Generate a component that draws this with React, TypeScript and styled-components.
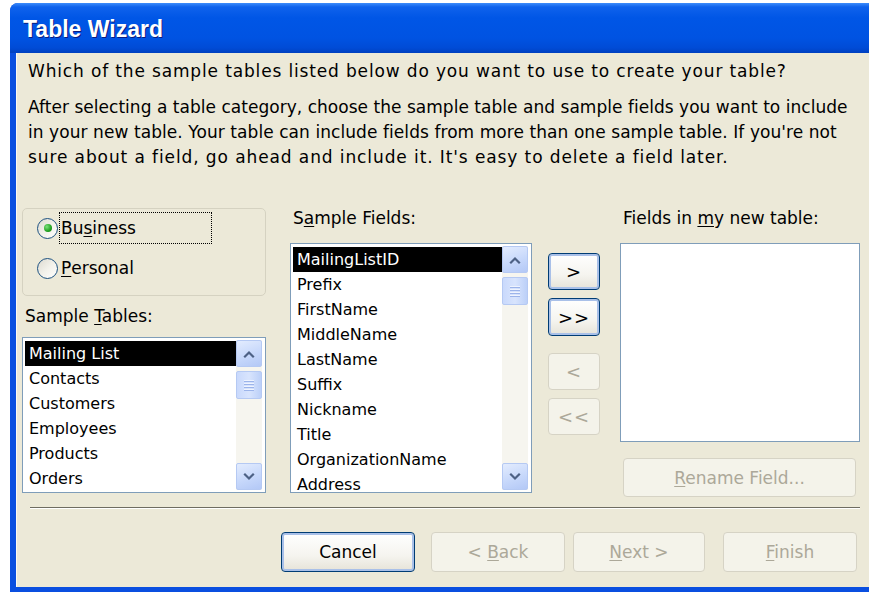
import React from "react";
import styled, { createGlobalStyle } from "styled-components";

const GlobalStyle = createGlobalStyle`
  html, body {
    margin: 0;
    padding: 0;
    background: #fff;
    overflow: hidden;
  }
  body {
    font-family: "DejaVu Sans", "Liberation Sans", sans-serif;
    font-size: 17px;
    color: #000;
  }
`;

const Window = styled.div`
  margin: 3px 0 0 10px;
  width: 859px;
  height: 589px;
  display: flex;
  flex-direction: column;
  border-radius: 8px 0 0 0;
  overflow: hidden;
  background: #0843d0;
`;

const TitleBar = styled.div`
  height: 50px;
  flex: none;
  box-sizing: border-box;
  padding: 3px 0 0 13px;
  display: flex;
  align-items: center;
  background: linear-gradient(
    180deg,
    #3d8cfb 0%,
    #0f62ec 8%,
    #0056e6 30%,
    #0053e2 70%,
    #004bd6 90%,
    #0040bf 100%
  );
`;

const Title = styled.span`
  font-family: "Liberation Sans", "DejaVu Sans", sans-serif;
  font-weight: bold;
  font-size: 23px;
  color: #fff;
  text-shadow: 1px 1px 0 #0a1c80;
`;

const Frame = styled.div`
  flex: 1;
  display: flex;
  flex-direction: column;
  border-left: 6px solid #0a4fe0;
  border-bottom: 5px solid #0a4fe0;
  box-shadow: inset 1px 0 0 #fbfaf4;
  background: #ece9d8;
  padding: 8px 9px 0 6px;
`;

const TextLine = styled.div<{ $track?: number }>`
  padding-left: 6px;
  white-space: nowrap;
  letter-spacing: ${(p) => p.$track ?? 0}px;
`;

const Question = styled(TextLine)`
  line-height: 20px;
`;

const Intro = styled.div`
  margin-top: 14px;
  line-height: 25px;
`;

const Main = styled.div`
  margin-top: 38px;
  display: flex;
  align-items: flex-start;
`;

const Column = styled.div<{ $w: number; $gap?: number }>`
  width: ${(p) => p.$w}px;
  margin-right: ${(p) => p.$gap ?? 0}px;
  display: flex;
  flex-direction: column;
`;

const RadioGroup = styled.div`
  height: 88px;
  box-sizing: border-box;
  border: 1px solid #d5d2c1;
  border-radius: 5px;
  padding: 3px 0 0 14px;
  display: flex;
  flex-direction: column;
  gap: 8px;
`;

const RadioRow = styled.label`
  height: 32px;
  display: flex;
  align-items: center;
`;

const RadioCircle = styled.span<{ $checked?: boolean }>`
  width: 21px;
  height: 21px;
  box-sizing: border-box;
  border-radius: 50%;
  border: 1px solid #1c5180;
  background: linear-gradient(135deg, #dcdad0 0%, #f2f1ea 50%, #ffffff 100%);
  display: flex;
  align-items: center;
  justify-content: center;

  &::after {
    content: "";
    display: ${(p) => (p.$checked ? "block" : "none")};
    width: 8px;
    height: 8px;
    border-radius: 50%;
    background: radial-gradient(circle at 35% 35%, #7ce27c 0%, #21a121 60%, #158015 100%);
  }
`;

const RadioLabel = styled.span<{ $focused?: boolean }>`
  margin-left: 1px;
  height: 32px;
  width: 153px;
  box-sizing: border-box;
  padding-left: 1px;
  display: flex;
  align-items: center;
  border: 1px dotted ${(p) => (p.$focused ? "#000" : "transparent")};
`;

const FieldLabel = styled.div<{ $top?: number }>`
  line-height: 20px;
  margin-top: ${(p) => p.$top ?? 0}px;
  padding-left: 3px;
`;

const Key = styled.span`
  text-decoration: underline;
  text-underline-offset: 2px;
`;

const ListBox = styled.div<{ $h: number; $top: number }>`
  height: ${(p) => p.$h}px;
  margin-top: ${(p) => p.$top}px;
  box-sizing: border-box;
  border: 1px solid #7f9db9;
  background: #fff;
  display: flex;
  overflow: hidden;
`;

const Items = styled.ul`
  flex: 1;
  margin: 0;
  padding: 3px 0 0 2px;
  list-style: none;
  overflow: hidden;
  font-size: 16px;
`;

const Item = styled.li<{ $selected?: boolean }>`
  height: 25px;
  line-height: 25px;
  padding-left: 4px;
  white-space: nowrap;
  background: ${(p) => (p.$selected ? "#000" : "transparent")};
  color: ${(p) => (p.$selected ? "#fff" : "#000")};
`;

const ScrollBar = styled.div`
  width: 26px;
  margin: 2px 3px 2px 0;
  display: flex;
  flex-direction: column;
  background: #f6f5ef;
`;

const ScrollButton = styled.div`
  height: 27px;
  box-sizing: border-box;
  border: 1px solid #b5c9f3;
  border-radius: 2px;
  background: linear-gradient(160deg, #e3ecfe 0%, #c7d8fb 55%, #b3c8f6 100%);
  display: flex;
  align-items: center;
  justify-content: center;
  flex: none;
`;

const Thumb = styled.div`
  margin-top: 4px;
  height: 28px;
  box-sizing: border-box;
  border: 1px solid #b5c9f3;
  border-radius: 2px;
  background: linear-gradient(90deg, #c9d9fc 0%, #d8e4fd 50%, #bcd0f8 100%);
  display: flex;
  flex-direction: column;
  align-items: center;
  justify-content: center;
  gap: 2px;
  flex: none;
`;

const Grip = styled.span`
  width: 10px;
  height: 1px;
  background: #eef3fe;
  box-shadow: 0 1px 0 #9cb4ea;
`;

const Track = styled.div`
  flex: 1;
`;

const Button = styled.button<{ $w: number; $h?: number; $default?: boolean }>`
  width: ${(p) => p.$w}px;
  height: ${(p) => p.$h ?? 38}px;
  flex: none;
  box-sizing: border-box;
  font: inherit;
  padding: 0;
  color: #000;
  border: 1px solid #003c74;
  border-radius: 4px;
  background: linear-gradient(180deg, #ffffff 0%, #f5f4ef 60%, #e6e3d8 100%);
  box-shadow: ${(p) => (p.$default ? "inset 0 0 0 2px #a9c0e8" : "inset 0 0 0 1px #dfe6f2")};

  &:disabled {
    border-color: #d6d3c5;
    color: #aca899;
    background: #f4f3ea;
    box-shadow: none;
  }
`;

const ArrowColumn = styled.div`
  width: 52px;
  margin-top: 45px;
  margin-right: 20px;
  display: flex;
  flex-direction: column;
`;

const ArrowButton = styled(Button)<{ $space: number }>`
  margin-top: ${(p) => p.$space}px;
  font-size: 18px;
  letter-spacing: 1px;
`;

const RenameButton = styled(Button)`
  margin: 16px 0 0 3px;
`;

const Separator = styled.div`
  margin: 10px 0 0 8px;
  height: 1px;
  background: #6f6d62;
  border-bottom: 1px solid #fff;
`;

const Footer = styled.div`
  margin-top: 23px;
  display: flex;
  justify-content: flex-end;
  gap: 16px;
  padding-right: 3px;
`;

const NavPair = styled.div`
  display: flex;
  gap: 8px;
  margin-right: 2px;
`;

function Chevron({ up }: { up?: boolean }) {
  return (
    <svg width="12" height="10" viewBox="0 0 12 10">
      <polyline
        points={up ? "2,7.5 6,3.5 10,7.5" : "2,2.5 6,6.5 10,2.5"}
        fill="none"
        stroke="#4d6185"
        strokeWidth="2.2"
        strokeLinecap="square"
      />
    </svg>
  );
}

function Scroller() {
  return (
    <ScrollBar>
      <ScrollButton>
        <Chevron up />
      </ScrollButton>
      <Thumb>
        <Grip />
        <Grip />
        <Grip />
        <Grip />
      </Thumb>
      <Track />
      <ScrollButton>
        <Chevron />
      </ScrollButton>
    </ScrollBar>
  );
}

const sampleTables = ["Mailing List", "Contacts", "Customers", "Employees", "Products", "Orders"];

const sampleFields = [
  "MailingListID",
  "Prefix",
  "FirstName",
  "MiddleName",
  "LastName",
  "Suffix",
  "Nickname",
  "Title",
  "OrganizationName",
  "Address",
];

export default function App() {
  return (
    <>
      <GlobalStyle />
      <Window>
        <TitleBar>
          <Title>Table Wizard</Title>
        </TitleBar>
        <Frame>
          <Question $track={0.85}>
            Which of the sample tables listed below do you want to use to create your table?
          </Question>
          <Intro>
            <TextLine $track={0.03}>
              After selecting a table category, choose the sample table and sample fields you want to include
            </TextLine>
            <TextLine $track={0.07}>
              in your new table. Your table can include fields from more than one sample table. If you're not
            </TextLine>
            <TextLine $track={0.9}>
              sure about a field, go ahead and include it. It's easy to delete a field later.
            </TextLine>
          </Intro>

          <Main>
            <Column $w={244} $gap={24}>
              <RadioGroup>
                <RadioRow>
                  <RadioCircle $checked />
                  <RadioLabel $focused>
                    Bu<Key>s</Key>iness
                  </RadioLabel>
                </RadioRow>
                <RadioRow>
                  <RadioCircle />
                  <RadioLabel>
                    <Key>P</Key>ersonal
                  </RadioLabel>
                </RadioRow>
              </RadioGroup>
              <FieldLabel $top={10}>
                Sample <Key>T</Key>ables:
              </FieldLabel>
              <ListBox $h={156} $top={11}>
                <Items>
                  {sampleTables.map((name, i) => (
                    <Item key={name} $selected={i === 0}>
                      {name}
                    </Item>
                  ))}
                </Items>
                <Scroller />
              </ListBox>
            </Column>

            <Column $w={242} $gap={16}>
              <FieldLabel>
                S<Key>a</Key>mple Fields:
              </FieldLabel>
              <ListBox $h={250} $top={15}>
                <Items>
                  {sampleFields.map((name, i) => (
                    <Item key={name} $selected={i === 0}>
                      {name}
                    </Item>
                  ))}
                </Items>
                <Scroller />
              </ListBox>
            </Column>

            <ArrowColumn>
              <ArrowButton $w={52} $h={37} $space={0} $default>
                &gt;
              </ArrowButton>
              <ArrowButton $w={52} $h={38} $space={8} $default>
                &gt;&gt;
              </ArrowButton>
              <ArrowButton $w={52} $h={37} $space={17} disabled>
                &lt;
              </ArrowButton>
              <ArrowButton $w={52} $h={37} $space={8} disabled>
                &lt;&lt;
              </ArrowButton>
            </ArrowColumn>

            <Column $w={240}>
              <FieldLabel>
                Fields in <Key>m</Key>y new table:
              </FieldLabel>
              <ListBox $h={199} $top={15} />
              <RenameButton $w={233} $h={39} disabled>
                <Key>R</Key>ename Field...
              </RenameButton>
            </Column>
          </Main>

          <Separator />

          <Footer>
            <Button $w={134} $h={40} $default>
              Cancel
            </Button>
            <NavPair>
              <Button $w={134} $h={40} disabled>
                &lt; <Key>B</Key>ack
              </Button>
              <Button $w={132} $h={40} disabled>
                <Key>N</Key>ext &gt;
              </Button>
            </NavPair>
            <Button $w={134} $h={40} disabled>
              <Key>F</Key>inish
            </Button>
          </Footer>
        </Frame>
      </Window>
    </>
  );
}
